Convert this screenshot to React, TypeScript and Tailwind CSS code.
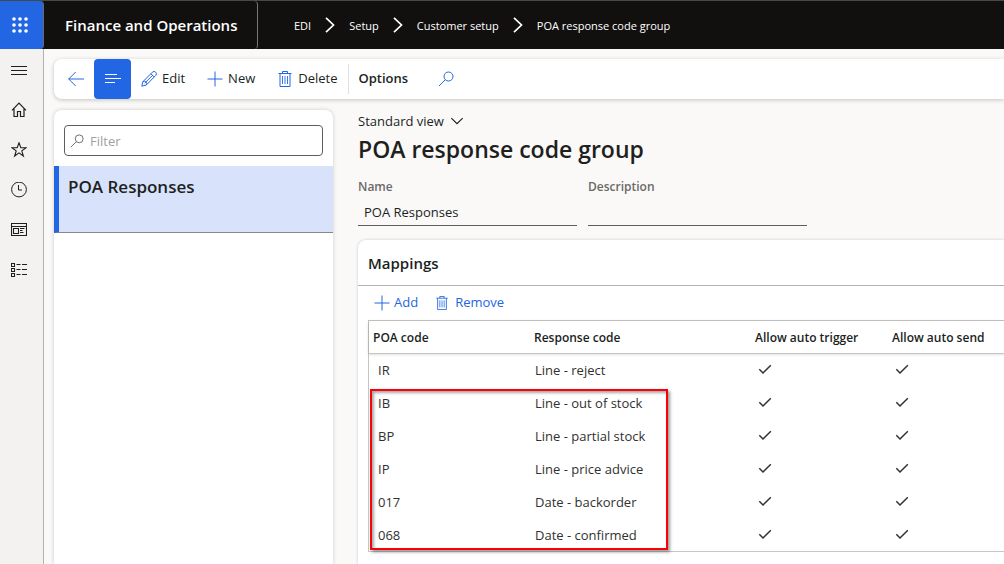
import type { ReactNode } from "react";

function Icon({ className, children }: { className: string; children: ReactNode }) {
  return (
    <svg viewBox="0 0 16 16" fill="none" stroke="currentColor" strokeWidth="1" className={className} aria-hidden="true">
      {children}
    </svg>
  );
}

const PlusIcon = ({ className }: { className: string }) => (
  <Icon className={className}>
    <path d="M8 0.5v15M0.5 8h15" />
  </Icon>
);

const TrashIcon = ({ className }: { className: string }) => (
  <Icon className={className}>
    <path d="M1.5 2.5h13M5.5 2.5v-2h5v2M3 2.5v13h10v-13" />
    <path d="M5.5 5v8M8 5v8M10.5 5v8" strokeWidth="0.9" />
  </Icon>
);

const SearchIcon = ({ className }: { className: string }) => (
  <Icon className={className}>
    <circle cx="10.5" cy="5.5" r="4.5" />
    <path d="M7.3 8.7L1 15" />
  </Icon>
);

const PencilIcon = ({ className }: { className: string }) => (
  <Icon className={className}>
    <path d="M0.8 15.2L1.9 10.7L11.4 1.2a2.2 2.2 0 0 1 3.3 3.3L5.2 14.1ZM9.9 2.7l3.3 3.3M1.9 10.7a2.4 2.4 0 0 1 3.3 3.4M3.6 12.3L12 3.9" />
  </Icon>
);

const CheckIcon = ({ className }: { className: string }) => (
  <Icon className={className}>
    <path d="M2.3 7.3L6 11L13.8 3.2" strokeWidth="1.5" />
  </Icon>
);

const railItems = [
  { label: "Expand navigation", icon: <path d="M0 4.5h16M0 8.5h16M0 12.5h16" /> },
  {
    label: "Home",
    icon: <path d="M1 8.3L8 1.2L15 8.3M3 6.8v7.7h3.5v-5h3v5H13V6.8" strokeWidth="1.2" />,
  },
  {
    label: "Favorites",
    icon: <path d="M8 0.8L9.8 5.7H15L10.8 8.9L12.4 14L8 10.9L3.6 14L5.2 8.9L1 5.7H6.2Z" strokeWidth="1.1" />,
  },
  {
    label: "Recent",
    icon: (
      <>
        <circle cx="8" cy="7.5" r="7.4" />
        <path d="M7.5 3v5h3.5" />
      </>
    ),
  },
  {
    label: "Workspaces",
    icon: <path d="M0.5 1.5h15v12H0.5ZM0.5 4.5h15M2.5 6.5h5v5h-5ZM9 6.5h4.5M9 8.5h2.5M9 10.5h3.5" strokeWidth="1.1" />,
  },
  {
    label: "Modules",
    icon: <path d="M0.5 1.5h3v3h-3ZM0.5 6.5h3v3h-3ZM0.5 11.5h3v3h-3ZM5.5 2.5h4M11 2.5h5M5.5 7.5h4M11 7.5h5M5.5 12.5h4M11 12.5h5" strokeWidth="1.1" />,
  },
];

const crumbs = ["EDI", "Setup", "Customer setup", "POA response code group"];

const rows = [
  ["IR", "Line - reject"],
  ["IB", "Line - out of stock"],
  ["BP", "Line - partial stock"],
  ["IP", "Line - price advice"],
  ["017", "Date - backorder"],
  ["068", "Date - confirmed"],
];

function Header() {
  return (
    <header className="flex h-[49px] shrink-0 border-t border-[#444b47] bg-[#11100f] text-white">
      <button aria-label="App launcher" className="flex w-11 items-center justify-center rounded-r-sm border-r border-[#6a6a6a] bg-[#2266e3] pr-1">
        <svg viewBox="0 0 16 16" fill="currentColor" className="size-4" aria-hidden="true">
          {[2, 8, 14].map((y) => [2, 8, 14].map((x) => <circle key={`${x}-${y}`} cx={x} cy={y} r="1.8" />))}
        </svg>
      </button>
      <div className="flex w-[214px] shrink-0 items-center rounded-r-sm border-r border-[#797775] pl-[21px] text-[15px] font-semibold whitespace-nowrap">
        Finance and Operations
      </div>
      <nav aria-label="Breadcrumb" className="flex items-center pl-9 text-[11px] whitespace-nowrap">
        {crumbs.map((crumb, i) => (
          <span key={crumb} className="flex items-center">
            {i > 0 && (
              <Icon className="mx-[11px] size-4">
                <path d="M4 0.8L11.5 8L4 15.2" strokeWidth="1.7" />
              </Icon>
            )}
            <a href="#" className="pt-0.5">{crumb}</a>
          </span>
        ))}
      </nav>
    </header>
  );
}

function Rail() {
  return (
    <nav aria-label="Main" className="flex w-11 shrink-0 flex-col border-r border-[#b3b2b1] bg-[#f3f2f1] pt-px">
      {railItems.map((item) => (
        <button key={item.label} aria-label={item.label} className="flex h-10 items-center justify-center pr-[5px]">
          <Icon className="size-4">{item.icon}</Icon>
        </button>
      ))}
    </nav>
  );
}

function ActionBar() {
  return (
    <div role="toolbar" aria-label="Actions" className="flex h-10 shrink-0 items-center rounded-l-lg bg-white text-[13px] shadow-[0_1px_4px_rgba(0,0,0,0.22)]">
      <button aria-label="Back" className="flex h-full w-10 items-center justify-center pl-1 text-[#2266e3]">
        <Icon className="size-4">
          <path d="M0.7 8H16M7.7 1L0.7 8L7.7 15" />
        </Icon>
      </button>
      <button aria-label="Show list" className="flex h-full w-[37px] items-center justify-center rounded-sm bg-[#2266e3] text-white">
        <Icon className="size-4">
          <path d="M0 3.5h12M0 7.5h16M0 11.5h10" />
        </Icon>
      </button>
      <button className="ml-[10px] flex items-center gap-[5px]">
        <PencilIcon className="size-4 text-[#2266e3]" />
        Edit
      </button>
      <button className="ml-[22px] flex items-center gap-[5px]">
        <PlusIcon className="size-4 text-[#2266e3]" />
        New
      </button>
      <button className="ml-[22px] flex items-center gap-[5px]">
        <TrashIcon className="size-4 text-[#2266e3]" />
        Delete
      </button>
      <div className="mx-[10px] h-[30px] border-l border-[#e1dfdd]" />
      <button className="font-semibold">Options</button>
      <button aria-label="Search" className="ml-[30px] text-[#2266e3]">
        <SearchIcon className="size-4" />
      </button>
    </div>
  );
}

function ListPanel() {
  return (
    <aside className="w-[279px] shrink-0 rounded-t-lg bg-white pt-[15px] shadow-[0_0_4px_rgba(0,0,0,0.18)]">
      <label className="mx-[10px] flex h-[31px] items-center gap-[6px] rounded-sm border border-[#605e5c] px-[5px]">
        <SearchIcon className="size-[14px] shrink-0 text-[#605e5c]" />
        <input aria-label="Filter" placeholder="Filter" className="w-full min-w-0 pt-0.5 text-[13px] outline-none placeholder:text-[#a19f9d]" />
      </label>
      <button className="mt-[10px] flex h-[67px] w-full items-start border-b border-l-[5px] border-b-[#8a8886] border-l-[#2266e3] bg-[#d8e3fb] px-[9px] pt-[9px] text-[17px] leading-6 font-semibold">
        POA Responses
      </button>
    </aside>
  );
}

function Field({ id, label, value }: { id: string; label: string; value: string }) {
  return (
    <div className="flex w-[219px] flex-col">
      <label htmlFor={id} className="text-xs leading-4 font-semibold text-[#6b6967]">
        {label}
      </label>
      <input id={id} defaultValue={value} className="mt-1 h-[27px] border-b border-[#605e5c] bg-transparent px-[6px] text-[13px] outline-none" />
    </div>
  );
}

function Mappings() {
  return (
    <section className="flex-1 rounded-tl-lg bg-white shadow-[0_0_3px_rgba(0,0,0,0.2)]">
      <h2 className="flex h-[46px] items-center border-b border-[#b3b2b1] px-[10px] pt-0.5 text-[15px] font-semibold">Mappings</h2>
      <div className="flex h-[34px] items-center gap-[17px] pl-4 text-[13px] text-[#2266e3]">
        <button className="flex items-center gap-1">
          <PlusIcon className="size-4" />
          Add
        </button>
        <button className="flex items-center gap-[6px]">
          <TrashIcon className="size-[14px]" />
          Remove
        </button>
      </div>
      <div className="relative ml-[10px] border-y border-l border-[#c8c6c4]">
        <table className="w-full table-fixed text-left text-[13px]">
          <colgroup>
            <col className="w-[161px]" />
            <col className="w-[221px]" />
            <col className="w-[137px]" />
            <col />
          </colgroup>
          <thead className="shadow-[0_1px_3px_rgba(0,0,0,0.22)]">
            <tr className="h-8 border-b border-[#c8c6c4] text-xs">
              {["POA code", "Response code", "Allow auto trigger", "Allow auto send"].map((h) => (
                <th key={h} scope="col" className="pt-0.5 pl-1 font-semibold whitespace-nowrap">
                  {h}
                </th>
              ))}
            </tr>
          </thead>
          <tbody className="text-[#323130]">
            {rows.map(([code, response]) => (
              <tr key={code} className="h-[33px]">
                <td className="pt-0.5 pl-[9px]">{code}</td>
                <td className="pt-0.5 pl-[5px]">{response}</td>
                <td className="pl-[6px]">
                  <CheckIcon className="size-4" />
                </td>
                <td className="pl-[6px]">
                  <CheckIcon className="size-4" />
                </td>
              </tr>
            ))}
          </tbody>
        </table>
        <div className="pointer-events-none absolute top-[68px] bottom-px left-px w-[298px] border-2 border-[#fb0007] shadow-[2px_2px_3px_rgba(0,0,0,0.4),inset_2px_2px_3px_rgba(0,0,0,0.35)]" />
      </div>
    </section>
  );
}

export default function App() {
  return (
    <div className="flex h-screen flex-col overflow-hidden bg-[#faf9f8] font-['Open_Sans',sans-serif] text-[#201f1e]">
      <Header />
      <div className="flex min-h-0 flex-1">
        <Rail />
        <div className="flex min-w-0 flex-1 flex-col gap-[11px] pt-[10px] pl-[10px]">
          <ActionBar />
          <div className="flex min-h-0 flex-1 gap-[25px]">
            <ListPanel />
            <main className="flex min-w-0 flex-1 flex-col">
              <button className="flex h-[22px] items-center gap-[6px] pt-0.5 text-[13px]">
                Standard view
                <Icon className="size-[14px]">
                  <path d="M1.5 3.5L8 10L14.5 3.5" strokeWidth="1.3" />
                </Icon>
              </button>
              <h1 className="text-[23px] leading-[34px] font-semibold">POA response code group</h1>
              <div className="mt-[13px] mb-[14px] flex gap-[11px]">
                <Field id="name" label="Name" value="POA Responses" />
                <Field id="description" label="Description" value="" />
              </div>
              <Mappings />
            </main>
          </div>
        </div>
      </div>
    </div>
  );
}
